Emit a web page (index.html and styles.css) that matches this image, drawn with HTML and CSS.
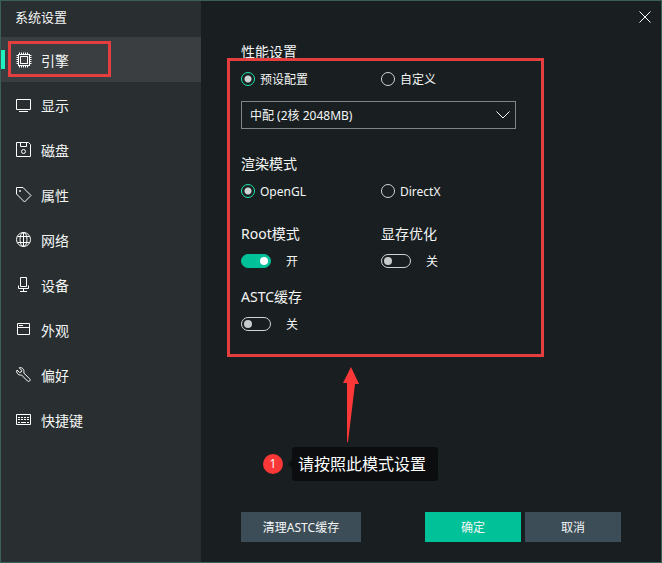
FILE: index.html
```html
<!doctype html>
<html lang="zh-CN">
  <head>
    <meta charset="UTF-8" />
    <meta name="viewport" content="width=device-width, initial-scale=1.0" />
    <title>系统设置</title>
    <link rel="stylesheet" href="styles.css">
  </head>
  <body>
    <div class="window">
      <aside class="sidebar">
        <h1>系统设置</h1>
        <nav>
          <a href="#engine" class="nav-item active">
            <svg class="icon" viewBox="0 0 16 16">
              <rect x="2.5" y="2.5" width="11" height="11" />
              <rect x="4.5" y="4.5" width="7" height="7" />
              <path d="M3.5 0.5v2M5.5 0.5v2M7.5 0.5v2M9.5 0.5v2M11.5 0.5v2M3.5 13.5v2M5.5 13.5v2M7.5 13.5v2M9.5 13.5v2M11.5 13.5v2M0.5 3.5h2M0.5 5.5h2M0.5 7.5h2M0.5 9.5h2M0.5 11.5h2M13.5 3.5h2M13.5 5.5h2M13.5 7.5h2M13.5 9.5h2M13.5 11.5h2" />
            </svg>
            <span>引擎</span>
            <i class="mark mark-nav"></i>
          </a>
          <a href="#display" class="nav-item">
            <svg class="icon" viewBox="0 0 16 16">
              <path d="M0.5 2.5h14v10h-14zM3 14.5h9" />
            </svg>
            <span>显示</span>
          </a>
          <a href="#disk" class="nav-item">
            <svg class="icon" viewBox="0 0 16 16">
              <path d="M0.5 0.5h12l2 2v12h-14zM4.5 0.5v4h6v-4" />
              <circle cx="7.5" cy="9.5" r="2" />
            </svg>
            <span>磁盘</span>
          </a>
          <a href="#property" class="nav-item">
            <svg class="icon" viewBox="0 0 16 16">
              <path d="M0.5 0.5h6.5l8 8-6.5 6.5-8-8z" />
              <circle cx="4" cy="4" r="0.6" />
            </svg>
            <span>属性</span>
          </a>
          <a href="#network" class="nav-item">
            <svg class="icon" viewBox="0 0 16 16">
              <circle cx="7.5" cy="7.5" r="7" />
              <ellipse cx="7.5" cy="7.5" rx="3.5" ry="7" />
              <path d="M1.5 4.5h12M1.5 10.5h12M7.5 0.5v14" />
            </svg>
            <span>网络</span>
          </a>
          <a href="#device" class="nav-item">
            <svg class="icon" viewBox="0 0 16 16">
              <path d="M4.5 0.5h6v9h-6zM2.5 8.5v3h10v-3M7.5 11.5v3M4 14.5h7" />
            </svg>
            <span>设备</span>
          </a>
          <a href="#look" class="nav-item">
            <svg class="icon" viewBox="0 0 16 16">
              <path d="M1.5 1.5h12v11h-12zM1.5 5.5h12M3 3.5h4" />
            </svg>
            <span>外观</span>
          </a>
          <a href="#preference" class="nav-item">
            <svg class="icon" viewBox="0 0 16 16">
              <path d="M3.2 0.8l2.5 2.5-0.5 1.7-1.7 0.5-2.5-2.5c-1 2.5 0.8 5.5 4.5 5l6 6c0.8 0.7 1.6 0.5 2.2-0.1s0.7-1.3 0-2l-5.9-5.9c0.9-3.5-1.6-6.1-4.6-5.2z" />
            </svg>
            <span>偏好</span>
          </a>
          <a href="#hotkey" class="nav-item">
            <svg class="icon" viewBox="0 0 16 16">
              <path d="M0.5 2.5h14v10h-14z" />
              <path d="M2 5.5h11M2 7.5h11" stroke-dasharray="2 1" />
              <path d="M2 10.5h2M5 10.5h5M11 10.5h2" />
            </svg>
            <span>快捷键</span>
          </a>
        </nav>
      </aside>

      <main class="content">
        <button type="button" class="close" aria-label="关闭">
          <svg viewBox="0 0 12 12"><path d="M0.5 0.5l11 11M11.5 0.5l-11 11" /></svg>
        </button>

        <form class="settings" id="settings">
          <fieldset class="group">
            <legend>性能设置</legend>
            <div class="row">
              <label class="option"><input type="radio" name="profile" checked /><span>预设配置</span></label>
              <label class="option"><input type="radio" name="profile" /><span>自定义</span></label>
            </div>
            <div class="select">
              <select aria-label="预设配置">
                <option>中配 (2核 2048MB)</option>
              </select>
              <svg viewBox="0 0 14 8"><path d="M0.5 0.5l6.5 6.5 6.5-6.5" /></svg>
            </div>
          </fieldset>

          <fieldset class="group">
            <legend>渲染模式</legend>
            <div class="row">
              <label class="option"><input type="radio" name="render" checked /><span>OpenGL</span></label>
              <label class="option"><input type="radio" name="render" /><span>DirectX</span></label>
            </div>
          </fieldset>

          <div class="switches">
            <div class="switch">
              <label for="root">Root模式</label>
              <div class="state"><input type="checkbox" id="root" checked /><span>开</span></div>
            </div>
            <div class="switch">
              <label for="vram">显存优化</label>
              <div class="state"><input type="checkbox" id="vram" /><span>关</span></div>
            </div>
            <div class="switch">
              <label for="astc">ASTC缓存</label>
              <div class="state"><input type="checkbox" id="astc" /><span>关</span></div>
            </div>
          </div>

          <i class="mark mark-settings"></i>
          <div class="note">
            <svg class="arrow" viewBox="0 0 16 76">
              <path d="M8 0l8 17-4 0-7 58h-1l0-59-4 0z" />
            </svg>
            <div class="step">
              <span class="number">1</span>
              <span class="tip">请按照此模式设置</span>
            </div>
          </div>
        </form>

        <div class="actions">
          <button type="button" class="btn btn-clear">清理ASTC缓存</button>
          <button type="submit" form="settings" class="btn btn-primary">确定</button>
          <button type="button" class="btn">取消</button>
        </div>
      </main>
    </div>
  </body>
</html>
```
FILE: styles.css
```css
* {
  box-sizing: border-box;
}
body {
  margin: 0;
  background: #191e20;
  color: #f4f6f6;
  font: 12px/20px "Noto Sans", "Noto Sans CJK SC", sans-serif;
}
button,
select {
  font: inherit;
  color: inherit;
}
.window {
  display: flex;
  min-height: 100vh;
  border: 1px solid #3a5f56;
}

/* sidebar */
.sidebar {
  flex: 0 0 200px;
  background: #292e30;
}
h1 {
  margin: 0;
  padding: 6px 14px 10px;
  font-size: 13px;
  font-weight: normal;
  line-height: 20px;
}
.nav-item {
  position: relative;
  display: flex;
  align-items: center;
  gap: 9px;
  height: 45px;
  padding-left: 15px;
  color: inherit;
  font-size: 14px;
  text-decoration: none;
}
.nav-item span,
.option span,
.state span {
  padding-top: 2px;
}
.nav-item.active {
  background: #3a3e40;
}
.nav-item.active::before {
  content: "";
  position: absolute;
  left: 0;
  top: 13px;
  width: 4px;
  height: 19px;
  background: #1ff0c0;
}
.icon {
  width: 16px;
  height: 16px;
}
svg {
  fill: none;
  stroke: #fff;
}

/* content */
.content {
  position: relative;
  flex: 1;
  display: flex;
  flex-direction: column;
  padding: 41px 40px 20px;
}
.close {
  position: absolute;
  top: 4px;
  right: 4px;
  width: 24px;
  height: 24px;
  padding: 6px;
  border: none;
  background: none;
}
.close svg {
  display: block;
}
.settings {
  position: relative;
  width: 275px;
}
.group {
  min-width: 0;
  margin: 0 0 25px;
  padding: 0;
  border: none;
}
.group + .group {
  margin-bottom: 23px;
}
legend,
.switch label {
  display: block;
  padding: 0;
  margin-bottom: 7px;
  font-size: 14px;
  line-height: 20px;
}
.row,
.switches {
  display: grid;
  grid-template-columns: 140px 1fr;
}
.switches {
  row-gap: 16px;
}
.option,
.state {
  display: flex;
  align-items: center;
  gap: 5px;
  height: 20px;
}
.state {
  gap: 15px;
}
input {
  appearance: none;
  margin: 0;
}
input[type="radio"] {
  width: 14px;
  height: 14px;
  border: 1px solid #d0d3d4;
  border-radius: 50%;
}
input[type="radio"]:checked {
  border-color: #1fe6b0;
  background: radial-gradient(circle, #d0d3d4 3px, transparent 4px);
}
.select {
  position: relative;
  margin-top: 12px;
}
.select select {
  display: block;
  appearance: none;
  width: 100%;
  height: 28px;
  padding: 2px 8px 0;
  border: 1px solid #7c8587;
  border-radius: 0;
  background: transparent;
}
.select svg {
  position: absolute;
  right: 6px;
  top: 10px;
  width: 14px;
  height: 8px;
  pointer-events: none;
}
input[type="checkbox"] {
  display: flex;
  align-items: center;
  width: 30px;
  height: 14px;
  padding: 0 2px;
  border: 1px solid #d0d3d4;
  border-radius: 7px;
}
input[type="checkbox"]::before {
  content: "";
  width: 8px;
  height: 8px;
  border-radius: 50%;
  background: #c8cbcc;
}
input[type="checkbox"]:checked {
  justify-content: flex-end;
  border-color: #00c197;
  background: #00c197;
}
input[type="checkbox"]:checked::before {
  background: #fff;
}

/* buttons */
.actions {
  display: flex;
  gap: 4px;
  margin-top: auto;
}
.btn {
  width: 96px;
  height: 30px;
  padding: 2px 0 0;
  border: none;
  background: #3d4d57;
}
.btn-clear {
  width: 120px;
  margin-right: auto;
}
.btn-primary {
  background: #00c197;
}

/* guide marks */
.mark {
  position: absolute;
  border: 3px solid #e53e3e;
  pointer-events: none;
}
.mark-nav {
  top: 4px;
  left: 7px;
  width: 103px;
  height: 36px;
}
.mark-settings {
  inset: 16px -28px -23px -14px;
}
.note {
  position: absolute;
  top: 100%;
  left: 22px;
  margin-top: 33px;
}
.arrow {
  display: block;
  width: 16px;
  height: 76px;
  margin: 0 0 4px 80px;
  fill: #fb3838;
  stroke: none;
}
.step {
  display: flex;
  align-items: center;
  gap: 9px;
}
.number {
  width: 20px;
  height: 20px;
  border-radius: 50%;
  background: #fb3838;
  text-align: center;
}
.tip {
  position: relative;
  padding: 7px 12px 7px 6px;
  border-radius: 3px;
  background: #0b0d0f;
  color: #fff;
  font-size: 16px;
  white-space: nowrap;
}
.tip::before {
  content: "";
  position: absolute;
  left: -4px;
  top: 13px;
  border: 4px solid transparent;
  border-left: none;
  border-right-color: #0b0d0f;
}
```
